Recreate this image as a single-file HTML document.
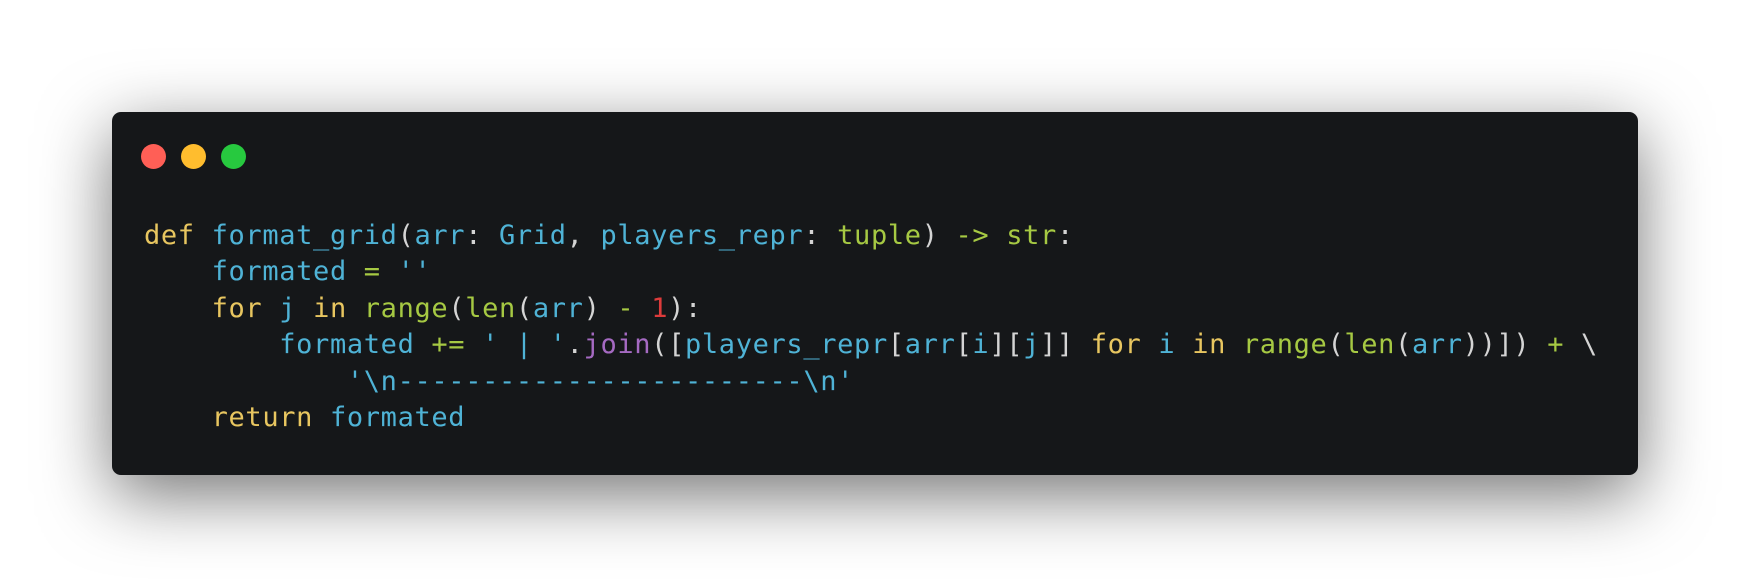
<!DOCTYPE html>
<html><head><style>
html,body{margin:0;padding:0;width:1750px;height:588px;background:#fff;overflow:hidden}
.win{position:absolute;left:112px;top:112px;width:1526px;height:363px;background:#151719;border-radius:9px;box-shadow:0 20px 70px rgba(0,0,0,0.55)}
.dot{position:absolute;top:144px;width:25px;height:25px;border-radius:50%}
pre{position:absolute;left:144px;top:218px;margin:0;font-family:"DejaVu Sans Mono","Liberation Mono",monospace;font-size:27px;letter-spacing:0.65px;line-height:36.4px;color:#d4d4d4;}
.k{color:#e8c660}.b{color:#4fb3d6}.g{color:#a6c943}.p{color:#a56ac2}.r{color:#dd3b3b}.w{color:#d4d4d4}
</style></head><body>
<div class="win"></div>
<div class="dot" style="left:141px;background:#ff5f56"></div>
<div class="dot" style="left:181px;background:#ffbd2e"></div>
<div class="dot" style="left:221px;background:#27c93f"></div>
<pre><span class="k">def</span> <span class="b">format_grid</span><span class="w">(</span><span class="b">arr</span><span class="w">:</span> <span class="b">Grid</span><span class="w">,</span> <span class="b">players_repr</span><span class="w">:</span> <span class="g">tuple</span><span class="w">)</span> <span class="g">-&gt;</span> <span class="g">str</span><span class="w">:</span>
    <span class="b">formated</span> <span class="g">=</span> <span class="b">''</span>
    <span class="k">for</span> <span class="b">j</span> <span class="k">in</span> <span class="g">range</span><span class="w">(</span><span class="g">len</span><span class="w">(</span><span class="b">arr</span><span class="w">)</span> <span class="g">-</span> <span class="r">1</span><span class="w">):</span>
        <span class="b">formated</span> <span class="g">+=</span> <span class="b">' | '</span><span class="w">.</span><span class="p">join</span><span class="w">([</span><span class="b">players_repr</span><span class="w">[</span><span class="b">arr</span><span class="w">[</span><span class="b">i</span><span class="w">][</span><span class="b">j</span><span class="w">]]</span> <span class="k">for</span> <span class="b">i</span> <span class="k">in</span> <span class="g">range</span><span class="w">(</span><span class="g">len</span><span class="w">(</span><span class="b">arr</span><span class="w">))])</span> <span class="g">+</span> <span class="w">\</span>
            <span class="b">'\n------------------------\n'</span>
    <span class="k">return</span> <span class="b">formated</span></pre>
</body></html>
